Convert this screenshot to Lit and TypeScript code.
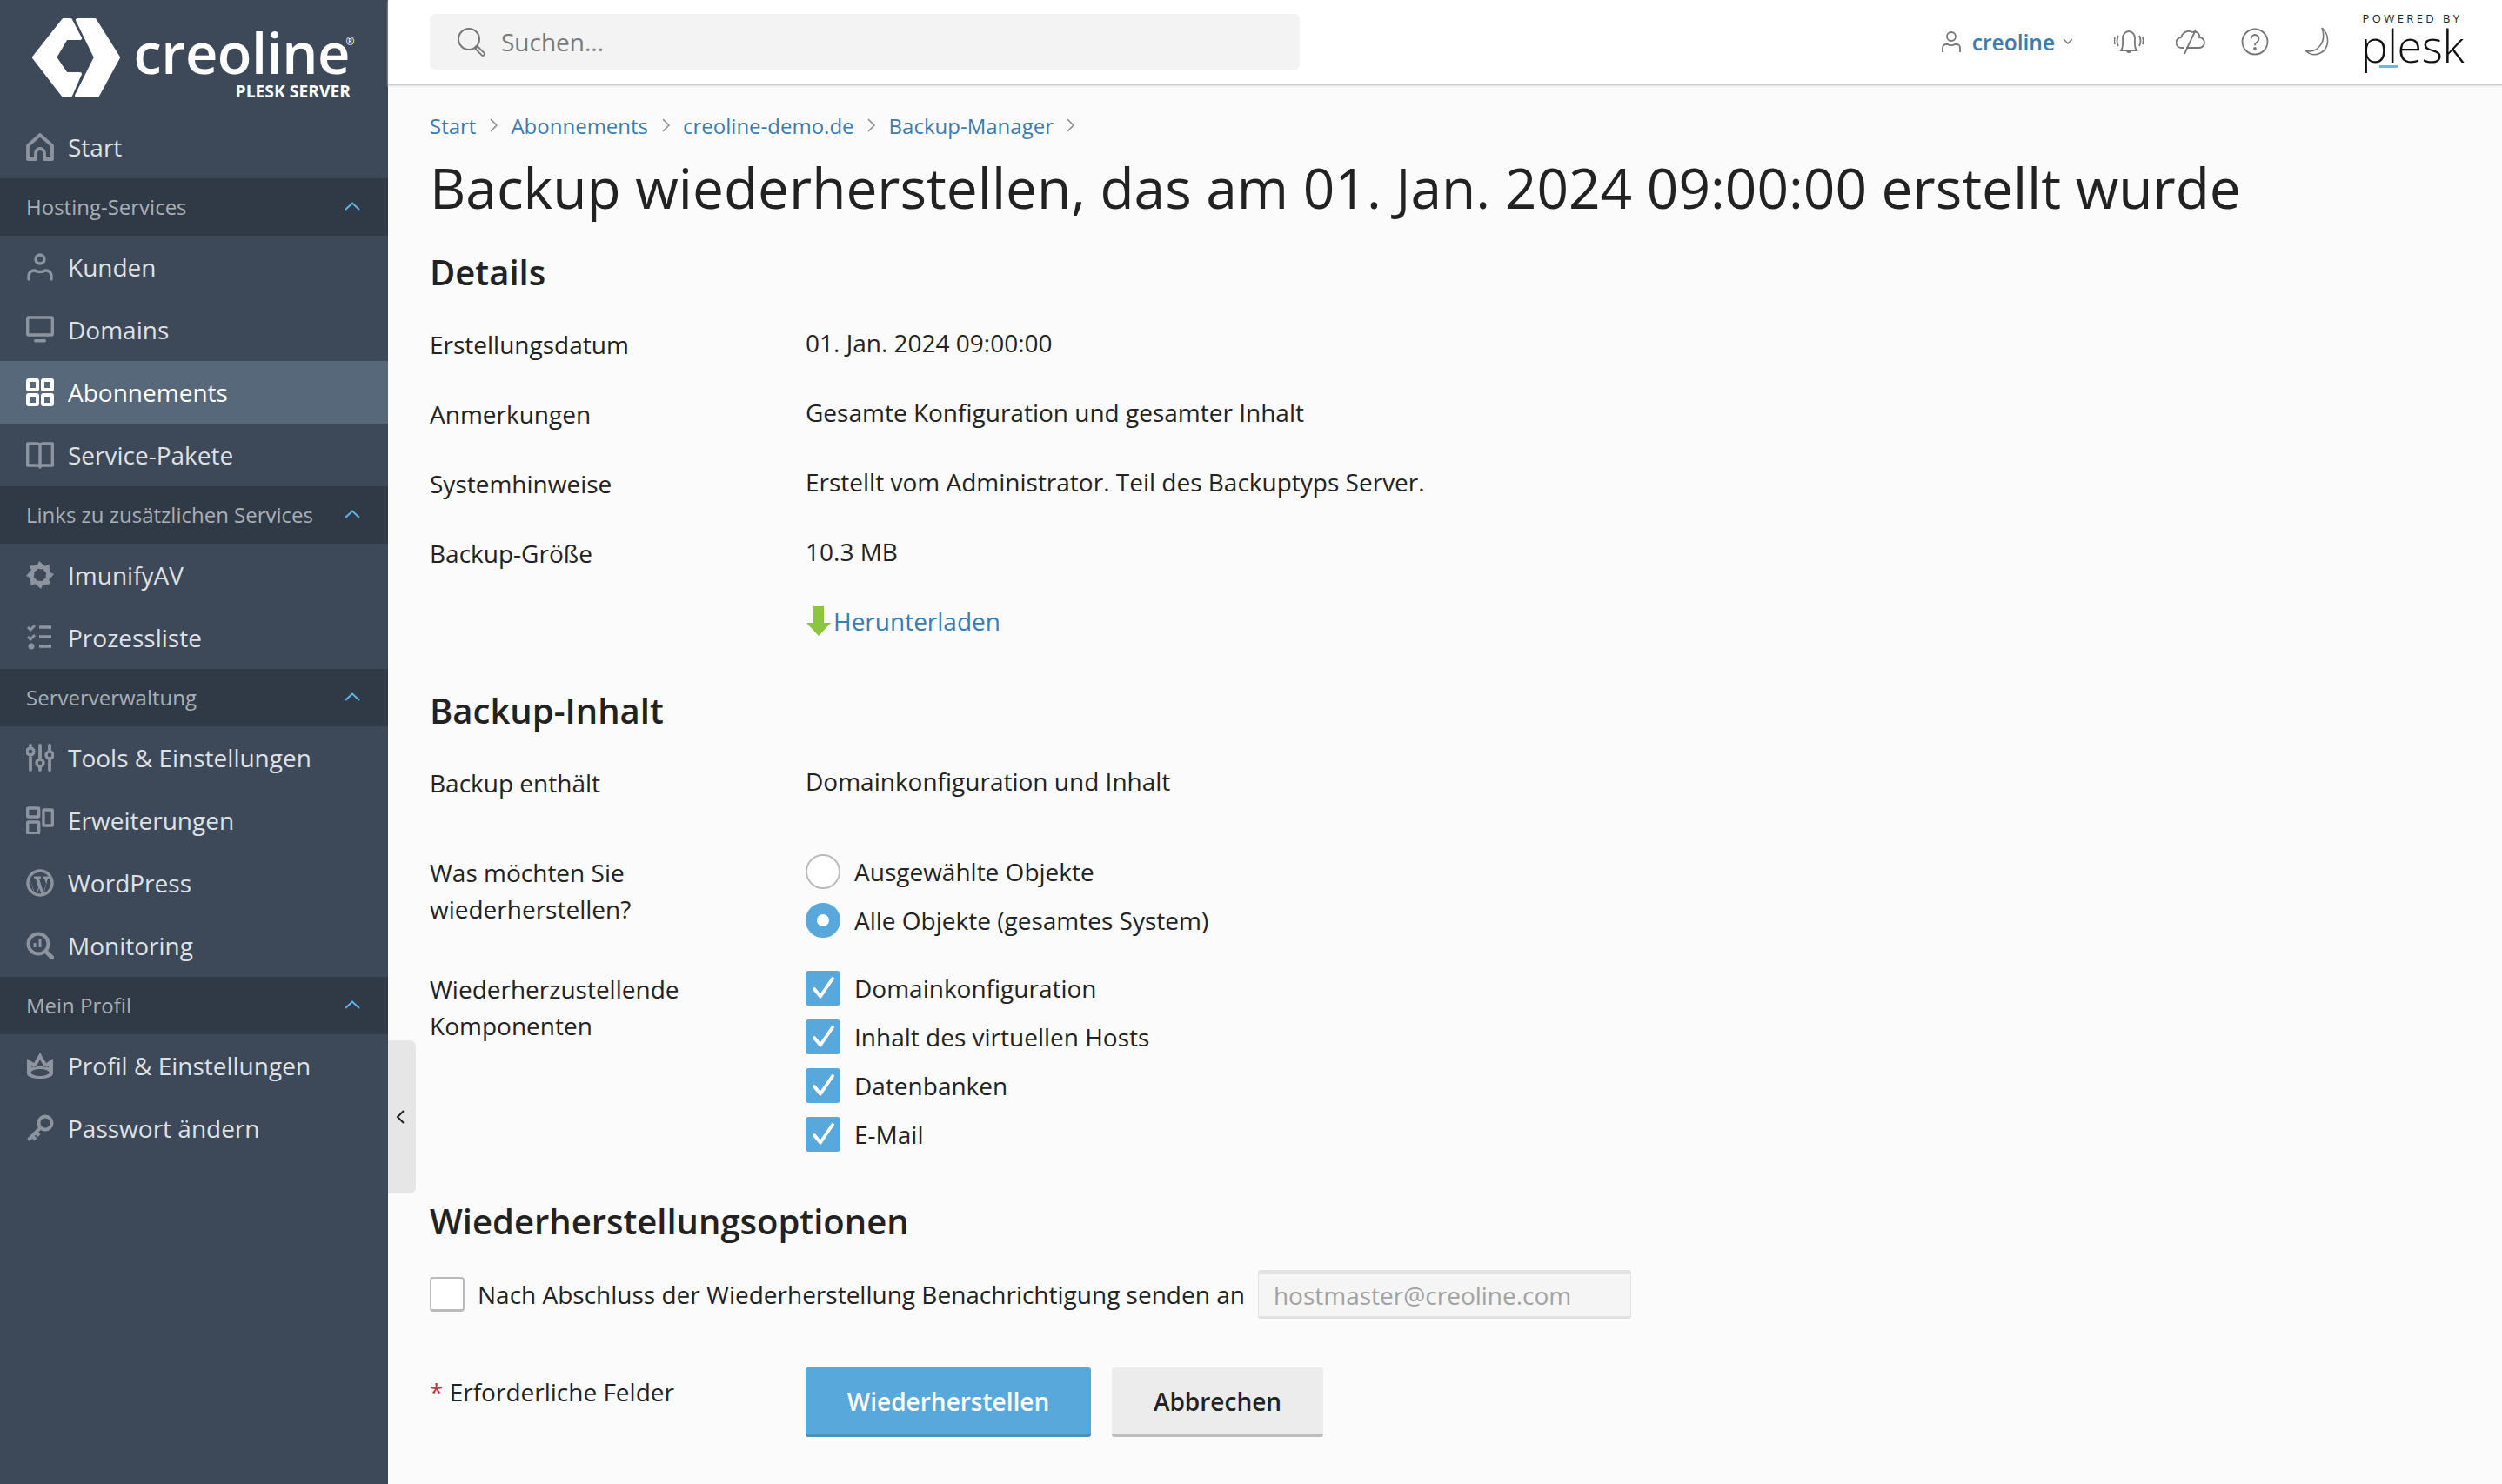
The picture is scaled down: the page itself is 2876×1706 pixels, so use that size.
import { LitElement, html, css, svg } from "lit";
import { customElement } from "lit/decorators.js";

const s32 = (c: unknown) => html`<svg class="ico" viewBox="0 0 32 32" fill="none" stroke="currentColor" stroke-width="3.400">${c}</svg>`;
const blades = [0, 45, 90, 135, 180, 225, 270, 315].map(
  (a) => svg`<path transform="rotate(${a} 16 16)" d="M15 0 L23 7 L18 9.500 L11 8.500Z" fill="currentColor" stroke="none"/>`
);
const icons: Record<string, unknown> = {
  home: s32(svg`<path stroke-width="3.800" stroke-linejoin="round" d="M2 14.500 L16 2 L30 14.500 V30 H21 V23 a5 5 0 0 0-10 0 V30 H2Z"/>`),
  user: s32(svg`<circle cx="16" cy="7" r="5"/><path stroke-linecap="round" d="M3 30 v-4 a6 6 0 0 1 6-6 h1 c3 2 9 2 12 0 h1 a6 6 0 0 1 6 6 v4"/>`),
  monitor: s32(svg`<rect x="1.700" y="2" width="28.600" height="20" rx="1"/><rect x="9" y="27" width="14" height="3.500" rx="1.700" fill="currentColor" stroke="none"/>`),
  grid: s32(svg`<g stroke-width="4"><rect x="2" y="2" width="11" height="11" rx="1"/><rect x="19" y="2" width="11" height="11" rx="1"/><rect x="2" y="19" width="11" height="11" rx="1"/><rect x="19" y="19" width="11" height="11" rx="1"/></g>`),
  book: s32(svg`<path stroke-linejoin="round" d="M1.700 3 h11 c2 0 3.300 1 3.300 2 c0-1 1.300-2 3.300-2 h11 v25 h-11 c-2 0-3.300 1-3.300 2 c0-1-1.300-2-3.300-2 h-11z M16 5 v25"/>`),
  imunify: s32(svg`${blades}`),
  process: s32(svg`<path stroke-width="3" d="M2 4 l3 3 l5-5 M2 15 l3 3 l5-5"/><circle cx="6" cy="26" r="3.500" fill="currentColor" stroke="none"/><path d="M15 4 h14 M15 15 h14 M15 26 h14"/>`),
  sliders: s32(svg`<path stroke-width="3.800" stroke-linecap="round" d="M5 2 v1 M5 16 v14 M16 2 v14 M16 27 v3 M27 2 v5 M27 19 v11"/><circle cx="5" cy="9" r="4"/><circle cx="16" cy="22" r="4"/><circle cx="27" cy="13" r="4"/>`),
  ext: s32(svg`<rect x="1.700" y="2" width="13" height="10" rx="1"/><rect x="1.700" y="18" width="13" height="13" rx="1"/><rect x="20" y="4" width="10.300" height="18" rx="1"/>`),
  wp: s32(svg`<circle cx="16" cy="16" r="14"/><path fill="currentColor" stroke="none" d="M4 11 L11 30 L14 21 L11 11 H9 V8.500 H17 V11 H15 L20 27 L23 17 L21 11 H19.500 V8.500 H27 V11 H25 L20 30 H18 L15 22 L12 30 H10Z"/>`),
  mon: s32(svg`<circle cx="14" cy="14" r="11.500" stroke-width="4"/><path stroke-width="5" stroke-linecap="round" d="M23 23 L30 30"/><path stroke-width="3" d="M10 13 v5 M16 9 v9"/>`),
  crown: s32(svg`<path fill="currentColor" stroke="none" d="M1 8 L9 13 L16 1 L23 13 L31 8 V25 C31 33 1 33 1 25Z"/><path fill="#3d4858" stroke="none" d="M6 16 L11 18 L16 9 L21 18 L26 16 V18 C20 15.500 12 15.500 6 18Z"/><ellipse cx="16" cy="24" rx="10.500" ry="4" fill="#3d4858" stroke="none"/>`),
  key: s32(svg`<circle cx="22" cy="10" r="7.500" stroke-width="4"/><path stroke-width="4" d="M16 16 L2.500 29.500 M7 25 L11 29 M11.500 21 L15 24.500"/>`),
};
const chev = html`<svg class="chev" viewBox="0 0 18 10" fill="none" stroke="currentColor" stroke-width="2"><path d="M1 9 L9 1.500 L17 9"/></svg>`;
const crumbSep = html`<svg class="sep" viewBox="0 0 9 16" fill="none" stroke="#888" stroke-width="1.500"><path d="M1 1 L8 8 L1 15"/></svg>`;
const tick = html`<svg viewBox="0 0 40 40" fill="none" stroke="#fff" stroke-width="3.800" stroke-linecap="round" stroke-linejoin="round"><path d="M10 21 L17 29.500 L31 9"/></svg>`;

const menu: [string, string, string?][] = [
  ["group", "Hosting-Services"],
  ["user", "Kunden"], ["monitor", "Domains"], ["grid", "Abonnements", "active"], ["book", "Service-Pakete"],
  ["group", "Links zu zusätzlichen Services"],
  ["imunify", "ImunifyAV"], ["process", "Prozessliste"],
  ["group", "Serververwaltung"],
  ["sliders", "Tools & Einstellungen"], ["ext", "Erweiterungen"], ["wp", "WordPress"], ["mon", "Monitoring"],
  ["group", "Mein Profil"],
  ["crown", "Profil & Einstellungen"], ["key", "Passwort ändern"],
];

@customElement("app-root")
export class AppRoot extends LitElement {
  static styles = css`
    :host { display: block; font-family: "Open Sans", sans-serif; color: #222; font-size: 28px; }
    * { box-sizing: border-box; }
    .app { display: grid; grid-template-columns: 446px 1fr; min-height: 1706px; position: relative; background: #fbfbfb; }
    .side { background: #3d4858; color: #dfe1e5; }
    .logo { height: 133px; display: flex; padding: 21px 0 0 37px; gap: 19px; }
    .hex { width: 102px; height: 92px; flex: none; }
    .brand { display: flex; flex-direction: column; color: #fff; align-items: flex-end; width: 248px; }
    .brand b { font-size: 65px; font-weight: 600; line-height: 60px; margin-top: 9px; letter-spacing: -0.5px; position: relative; padding-right: 4px; }
    .brand sup { position: absolute; right: -1px; top: 12px; font-size: 12px; line-height: 12px; font-weight: 600; }
    .brand small { font-size: 19.300px; font-weight: 700; line-height: 22px; margin-top: 4px; padding-right: 3px; }
    .item { height: 72px; display: flex; align-items: center; padding: 0 0 1px 30px; gap: 16px; }
    .item .ico { width: 32px; height: 32px; color: #8d949f; flex: none; }
    .item.active { background: #58687b; color: #fff; }
    .item.active .ico { color: #fff; }
    .group { height: 66px; background: #303a46; display: flex; align-items: center; justify-content: space-between; padding: 0 32px 2px 30px; font-size: 24px; color: #a9afb6; }
    .chev { width: 18px; height: 10px; color: #5fb5ec; }
    .toggle { position: absolute; left: 446px; top: 1196px; width: 32px; height: 176px; background: #e6e6e6; border-radius: 0 7px 7px 0; display: flex; align-items: center; padding-left: 9px; }
    .toggle svg { width: 10px; height: 16px; }

    .main { display: flex; flex-direction: column; min-width: 0; }
    .top { height: 98px; background: #fff; border-bottom: 2px solid #c9c9c9; box-shadow: 0 1px 2px #ddd; display: flex; align-items: center; padding: 0 44px 0 48px; }
    .search { width: 1000px; height: 64px; background: #f3f3f3; border-radius: 6px; display: flex; align-items: center; padding-left: 31px; gap: 17px; color: #7a7a7a; }
    .search svg { width: 34px; height: 34px; }
    .tools { margin-left: auto; display: flex; align-items: center; }
    .tools svg { display: block; flex: none; }
    .uname { color: #3a7cb0; font-weight: 600; font-size: 24.500px; margin: 0 9px 0 13px; }
    .bell { margin-left: 47px; }
    .cloud { margin-left: 37px; }
    .help { margin-left: 41px; }
    .moon { margin-left: 41px; }
    .pl { margin: -4px 0 0 35px; display: flex; flex-direction: column; align-items: center; width: 118px; position: relative; }
    .pl i { font-style: normal; font-size: 13px; letter-spacing: 3.400px; line-height: 16px; color: #222; white-space: nowrap; margin-top: -4px; }
    .pl b { font-weight: 300; font-size: 52px; line-height: 46px; color: #111; letter-spacing: -0.4px; }
    .pl u { position: absolute; left: 21px; top: 58px; width: 21px; height: 3px; background: #5fbde8; }

    .page { padding: 0 0 0 48px; }
    .crumbs { margin-top: 28px; height: 36px; display: flex; align-items: center; font-size: 24px; color: #3a7cb0; }
    .sep { width: 9px; height: 16px; margin: 0 15.500px; }
    h1 { font-weight: 400; font-size: 64px; line-height: 84px; margin: 12px 0 0; color: #222; }
    h2 { font-weight: 600; font-size: 40px; line-height: 50px; margin: 0; color: #222; }
    .details { margin-top: 30px; }
    .rows { display: grid; grid-template-columns: 432px 1fr; line-height: 40px; }
    .rows > .l { padding-top: 2px; }
    .gapA { row-gap: 38px; margin-top: 36px; }
    .bk { margin-top: 58px; }
    .dl { color: #3a7cb0; display: flex; align-items: center; }
    .dl svg { width: 30px; height: 36px; margin-right: 2px; }
    .contains { margin-top: 36px; }
    .was { margin-top: 62px; }
    .was .l { line-height: 42px; padding-top: 0; }
    .opts { display: flex; flex-direction: column; gap: 16px; }
    .opt { display: flex; align-items: center; gap: 16px; height: 40px; }
    .radio { width: 40px; height: 40px; border-radius: 50%; border: 2.500px solid #bbb; background: #fff; flex: none; }
    .radio.on { background: #fff; border: 13px solid #59a8dc; }
    .box { width: 40px; height: 40px; border-radius: 4px; background: #59a8dc; flex: none; }
    .box.off { background: #fff; border: 2px solid #bbb; border-bottom-width: 3px; }
    .comp { margin-top: 38px; }
    .opth { margin-top: 55px; }
    .notify { margin-top: 31px; display: flex; align-items: center; gap: 15px; height: 56px; }
    .email { width: 429px; height: 56px; background: #f5f5f5; border: 1px solid #e2e2e2; border-top: 5px solid #e2e2e2; border-bottom-width: 3px; border-radius: 3px; color: #a2a2a2; display: flex; align-items: center; padding-left: 17px; }
    .req { margin-top: 56px; display: grid; grid-template-columns: 432px 1fr; }
    .req .r { padding-top: 8px; line-height: 40px; }
    .req .r span { color: #c0394a; }
    .btns { display: flex; gap: 24px; }
    .btn { height: 80px; border-radius: 3px; display: flex; align-items: center; justify-content: center; font-weight: 600; padding-top: 2px; }
    .b1 { width: 328px; background: #59a8dc; color: #fff; border-bottom: 4px solid #4c8fba; }
    .b2 { width: 243px; background: #ececec; color: #222; border-bottom: 4px solid #bdbdbd; }
  `;

  renderMenu() {
    return menu.map(([k, t, a]) =>
      k === "group"
        ? html`<div class="group"><span>${t}</span>${chev}</div>`
        : html`<div class="item ${a ?? ""}">${icons[k]}<span>${t}</span></div>`
    );
  }

  render() {
    const ic = "#777";
    return html`<div class="app">
      <aside class="side">
        <div class="logo">
          <svg class="hex" viewBox="37 21 102 92" fill="#fff" stroke="#fff" stroke-width="4" stroke-linejoin="round">
            <path d="M73 23 H81 L92 44 H76 L63 66 L76 85 H92 L81 110 H73 L39 66Z"/>
            <path d="M89 23 H109 L136 66 L112 110 H88 L110 66Z"/>
          </svg>
          <div class="brand"><b>creoline<sup>®</sup></b><small>PLESK SERVER</small></div>
        </div>
        <div class="item">${icons.home}<span>Start</span></div>
        ${this.renderMenu()}
      </aside>
      <div class="toggle"><svg viewBox="0 0 10 16" fill="none" stroke="#222" stroke-width="2"><path d="M9 1 L2 8 L9 15"/></svg></div>
      <div class="main">
        <header class="top">
          <div class="search">
            <svg viewBox="0 0 34 34" fill="none" stroke="#777" stroke-width="2"><circle cx="14" cy="14" r="12"/><path stroke-width="5.500" stroke-linecap="round" d="M23 24 L30 31"/><path stroke="#f3f3f3" stroke-width="2" stroke-linecap="round" d="M24 25 L30 31"/></svg>
            <span>Suchen...</span>
          </div>
          <div class="tools">
            <svg width="22" height="26" viewBox="0 0 22 26" fill="none" stroke="${ic}" stroke-width="1.800"><circle cx="11" cy="7" r="5"/><path d="M1 25 v-5 a4 4 0 0 1 4-4 h2 c2 1.500 6 1.500 8 0 h2 a4 4 0 0 1 4 4 v5"/></svg>
            <span class="uname">creoline</span>
            <svg width="12" height="8" viewBox="0 0 12 8" fill="none" stroke="${ic}" stroke-width="1.500"><path d="M1 1 L6 6 L11 1"/></svg>
            <svg class="bell" width="34" height="28" viewBox="0 0 34 28" fill="none" stroke="${ic}" stroke-width="1.800"><path d="M8 24 C11 20 10 15 10 10 a7 8 0 0 1 14 0 C24 15 23 20 26 24Z M15 24 a2 2 0 0 0 4 0 M5 7 C3 11 3 15 5 19 M1 9 C0 12 0 14 1 17 M29 7 C31 11 31 15 29 19 M33 9 C34 12 34 14 33 17"/></svg>
            <svg class="cloud" width="34" height="30" viewBox="0 0 34 30" fill="none" stroke="${ic}" stroke-width="1.800"><path d="M9 22 H7 a6 6 0 0 1-1-12 C8 4 14 1 19 4 C25 2 28 7 27 10 a6 6 0 0 1 0 12 H12 M23 1 L10 29"/></svg>
            <svg class="help" width="32" height="32" viewBox="0 0 32 32" fill="none" stroke="${ic}" stroke-width="1.800"><circle cx="16" cy="16" r="14.500"/><path d="M11.500 12.500 a4.500 4.500 0 1 1 7 3.800 c-1.700 1-2.500 2-2.500 4"/><circle cx="16" cy="24" r="1" fill="${ic}"/></svg>
            <svg class="moon" width="30" height="34" viewBox="0 0 30 34" fill="none" stroke="${ic}" stroke-width="1.600"><path d="M20 1 C30 10 28 26 18 30 C12 33 6 32 1 27 C14 31 26 18 20 1Z"/></svg>
            <div class="pl"><i>POWERED BY</i><b>plesk</b><u></u></div>
          </div>
        </header>
        <div class="page">
          <nav class="crumbs"><span>Start</span>${crumbSep}<span>Abonnements</span>${crumbSep}<span>creoline-demo.de</span>${crumbSep}<span>Backup-Manager</span>${crumbSep}</nav>
          <h1>Backup wiederherstellen, das am 01. Jan. 2024 09:00:00 erstellt wurde</h1>
          <h2 class="details">Details</h2>
          <div class="rows gapA">
            <div class="l">Erstellungsdatum</div><div>01. Jan. 2024 09:00:00</div>
            <div class="l">Anmerkungen</div><div>Gesamte Konfiguration und gesamter Inhalt</div>
            <div class="l">Systemhinweise</div><div>Erstellt vom Administrator. Teil des Backuptyps Server.</div>
            <div class="l">Backup-Größe</div><div>10.3 MB</div>
            <div></div><div class="dl"><svg viewBox="0 0 30 36"><path fill="#8cc63f" d="M9 1 H21 V20 H29 L15 35 L1 20 H9Z"/></svg>Herunterladen</div>
          </div>
          <h2 class="bk">Backup-Inhalt</h2>
          <div class="rows contains"><div class="l">Backup enthält</div><div>Domainkonfiguration und Inhalt</div></div>
          <div class="rows was">
            <div class="l">Was möchten Sie<br />wiederherstellen?</div>
            <div class="opts">
              <div class="opt"><div class="radio"></div>Ausgewählte Objekte</div>
              <div class="opt"><div class="radio on"></div>Alle Objekte (gesamtes System)</div>
            </div>
          </div>
          <div class="rows was comp">
            <div class="l">Wiederherzustellende<br />Komponenten</div>
            <div class="opts">
              <div class="opt"><div class="box">${tick}</div>Domainkonfiguration</div>
              <div class="opt"><div class="box">${tick}</div>Inhalt des virtuellen Hosts</div>
              <div class="opt"><div class="box">${tick}</div>Datenbanken</div>
              <div class="opt"><div class="box">${tick}</div>E-Mail</div>
            </div>
          </div>
          <h2 class="opth">Wiederherstellungsoptionen</h2>
          <div class="notify"><div class="box off"></div><span>Nach Abschluss der Wiederherstellung Benachrichtigung senden an</span><div class="email">hostmaster@creoline.com</div></div>
          <div class="req">
            <div class="r"><span>*</span> Erforderliche Felder</div>
            <div class="btns"><div class="btn b1">Wiederherstellen</div><div class="btn b2">Abbrechen</div></div>
          </div>
        </div>
      </div>
    </div>`;
  }
}
